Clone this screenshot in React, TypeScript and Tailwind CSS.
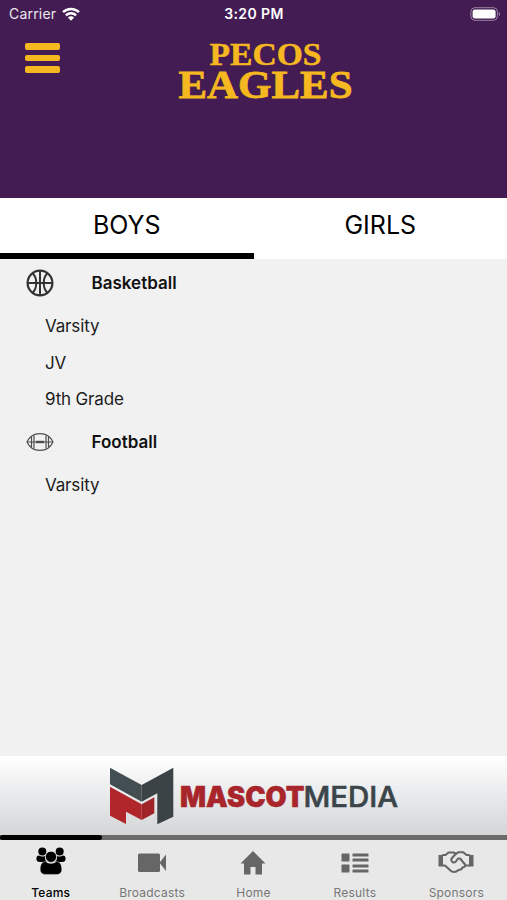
import type { ReactNode } from "react";
import clsx from "clsx";

const sports = [
  { name: "Basketball", icon: <BasketballIcon />, teams: ["Varsity", "JV", "9th Grade"] },
  { name: "Football", icon: <FootballIcon />, teams: ["Varsity"] },
];

const navItems: { label: string; icon: ReactNode; active?: boolean }[] = [
  { label: "Teams", icon: <TeamsIcon />, active: true },
  { label: "Broadcasts", icon: <CameraIcon /> },
  { label: "Home", icon: <HomeIcon /> },
  { label: "Results", icon: <ResultsIcon /> },
  { label: "Sponsors", icon: <HandshakeIcon /> },
];

function BasketballIcon() {
  return (
    <svg viewBox="0 0 28 28" className="w-7 h-7" fill="none" stroke="#333333" strokeWidth="2">
      <circle cx="14" cy="14" r="12.4" strokeWidth="2.2" />
      <path d="M14 1.5v25M1.5 14h25" />
      <path d="M6.5 4C11.5 9 11.5 19 6.5 24M21.5 4C16.5 9 16.5 19 21.5 24" />
    </svg>
  );
}

function FootballIcon() {
  return (
    <svg viewBox="0 0 28 20" className="w-7 h-5" fill="none" stroke="#4d4d4d" strokeWidth="1.2">
      <path d="M1 10C6 -1.2 22 -1.2 27 10C22 21.2 6 21.2 1 10Z" />
      <path d="M1 10h26M5.5 5v10M8 3.4v13.2M20 3.4v13.2M22.5 5v10" />
      <path d="M10 10h8" strokeWidth="2.4" />
    </svg>
  );
}

function TeamsIcon() {
  return (
    <svg viewBox="0 0 30 28" className="w-[30px] h-7" fill="currentColor">
      <circle cx="6.3" cy="4.6" r="4" />
      <circle cx="23.7" cy="4.6" r="4" />
      <path d="M3 8.5c1 .7 2.2 1 3.4 1 1 0 1.8-.2 2.6-.6-.3 2.9.5 4.7 1.7 6.1H4C1.5 15 .4 13.8.4 12c0-1.8.6-3.500 2.600-3.500ZM27 8.500c-1 .7-2.200 1-3.400 1-1 0-1.800-.2-2.600-.6.3 2.900-.5 4.700-1.700 6.100H26c2.500 0 3.600-1.200 3.600-3 0-1.800-.6-3.500-2.600-3.500Z" />
      <path
        d="M9.500 14.500c1.500 1.300 3.400 2 5.500 2s4-.7 5.500-2c4 0 5.300 4.200 5.300 8 0 3-1.800 4.900-4.600 4.900H8.800c-2.800 0-4.600-1.900-4.600-4.900 0-3.800 1.300-8 5.300-8Z"
        stroke="#e8e8e8"
        strokeWidth=".4"
      />
      <circle cx="15" cy="9.8" r="5.600" stroke="#e8e8e8" strokeWidth=".7" />
    </svg>
  );
}

function CameraIcon() {
  return (
    <svg viewBox="0 0 30 28" className="w-[30px] h-7" fill="currentColor">
      <rect x="1" y="6.500" width="22" height="18.500" rx="1.500" />
      <path d="M22.500 15.800 29 7.500v16.500Z" />
    </svg>
  );
}

function HomeIcon() {
  return (
    <svg viewBox="0 0 26 28" className="w-[26px] h-7" fill="currentColor">
      <path d="M13 4 .5 16.500H4v11h6.500V20h5v7.500H22v-11h3.500Z" />
    </svg>
  );
}

function ResultsIcon() {
  return (
    <svg viewBox="0 0 28 28" className="w-7 h-7" fill="currentColor">
      <rect x="0.5" y="6.500" width="8" height="8" rx=".6" />
      <rect x="0.5" y="17.500" width="8" height="8" rx=".6" />
      <rect x="11.500" y="6.500" width="16" height="3" rx=".6" />
      <rect x="11.500" y="11.500" width="16" height="3" rx=".6" />
      <rect x="11.500" y="17.500" width="16" height="3" rx=".6" />
      <rect x="11.500" y="22.500" width="16" height="3" rx=".6" />
    </svg>
  );
}

function HandshakeIcon() {
  return (
    <svg
      viewBox="0 0 36 28"
      className="w-9 h-7"
      fill="none"
      stroke="currentColor"
      strokeWidth="2.1"
      strokeLinejoin="round"
      strokeLinecap="round"
    >
      <path d="M.5 8H5v11.500H.5ZM31 8h4.500v11.500H31Z" fill="currentColor" stroke="none" />
      <path d="M5 8h2.500l3-2.500h5L18 6.800l2.500-1.600h4.800L28.500 8H31" />
      <path d="M5 18.500h2l5.500 5c1 1 2.200 1.500 3.500 1.500 2 0 3.500-1 4.500-2 2 0 3.500-1 4-2.500 1.500-.3 2.500-1 3-2H31" />
      <path d="M18 6.800 14 11c-1.200 1.500-.8 3.500.8 4.200 1.400.6 2.700 0 3.500-1.200l1.800-2.500h2L27 17.500" />
    </svg>
  );
}

function StatusBar() {
  return (
    <div className="grid grid-cols-3 items-center h-[27px] pl-[9px] pr-[6px] text-white">
      <div className="flex items-center gap-[6px]">
        <span className="text-[14px] tracking-[0.2px] text-white/90">Carrier</span>
        <svg viewBox="0 0 18 14" className="w-[18px] h-[14px]" fill="none" stroke="white" strokeWidth="2.5">
          <path d="M1 5.200a11.500 11.500 0 0 1 16 0M3.900 8.400a7.300 7.300 0 0 1 10.200 0" />
          <path d="M9 13.800 5.900 10.600a4.400 4.400 0 0 1 6.200 0Z" fill="white" stroke="none" />
        </svg>
      </div>
      <span className="pr-[2px] text-center text-[14px] font-semibold tracking-[0.4px]">3:20 PM</span>
      <svg viewBox="0 0 31 14" className="w-[31px] h-[14px] justify-self-end">
        <rect x=".9" y=".7" width="26.500" height="12.600" rx="4" fill="none" stroke="white" strokeOpacity=".45" />
        <rect x="2.600" y="2.400" width="23" height="9.200" rx="2.400" fill="white" />
        <path d="M28.800 5c1.600.5 1.600 3.500 0 4Z" fill="white" fillOpacity=".5" />
      </svg>
    </div>
  );
}

function Header() {
  return (
    <header className="h-[198px] bg-[#431c53]">
      <StatusBar />
      <div className="flex pl-[25px]">
        <button className="flex flex-col gap-[5px] pt-[16px] self-start">
          <span className="w-[35px] h-[6.5px] rounded-[2px] bg-[#f5b821]" />
          <span className="w-[35px] h-[6.5px] rounded-[2px] bg-[#f5b821]" />
          <span className="w-[35px] h-[6.5px] rounded-[2px] bg-[#f5b821]" />
        </button>
        <svg
          viewBox="0 0 180 90"
          className="w-[180px] h-[90px] ml-[116px] font-['Liberation_Serif',serif] font-bold"
          fill="#f5b821"
          stroke="#f5b821"
          strokeWidth=".5"
        >
          <text x="33.5" y="37.500" fontSize="32" textLength="112" lengthAdjust="spacingAndGlyphs">PECOS</text>
          <text x="2.5" y="71.300" fontSize="41" strokeWidth=".8" textLength="174" lengthAdjust="spacingAndGlyphs">EAGLES</text>
        </svg>
      </div>
    </header>
  );
}

function Tabs() {
  return (
    <div className="grid grid-cols-2 h-[61px] bg-white text-[25px] text-black">
      <button className="pt-px border-b-[6px] border-black">BOYS</button>
      <button className="pt-px border-b-[6px] border-white">GIRLS</button>
    </div>
  );
}

function SponsorBanner() {
  return (
    <div className="h-[79px] pl-[109px] pt-[11px] bg-linear-to-b from-white to-[#d3d5d7]">
      <svg viewBox="0 0 290 60" className="w-[290px] h-[60px] font-['Inter',sans-serif]">
        <path d="M1 .7 32.700 18v16.700L1 17.300Z" fill="#434e52" />
        <path d="M32.700 18 64.300.7v49L48.300 57.300v-31L32.700 34.700Z" fill="#3b4346" />
        <path d="M1 19.700 32.700 37.300V53L17 44.700V57L1 48.700Z" fill="#b0262b" />
        <path d="M32.700 37.300 45.300 30.300v16L32.700 53Z" fill="#a02327" />
        <text x="71" y="39.500" fontSize="28" fontWeight="900" fill="#a8262b" stroke="#a8262b" strokeWidth=".5" textLength="124.5" lengthAdjust="spacingAndGlyphs">MASCOT</text>
        <text x="194.5" y="39.500" fontSize="28" fontWeight="500" fill="#3b4549" stroke="#3b4549" strokeWidth=".6" textLength="94.5" lengthAdjust="spacingAndGlyphs">MEDIA</text>
      </svg>
    </div>
  );
}

function BottomNav() {
  return (
    <nav className="bg-[#e8e8e8]">
      {/* Progress line */}
      <div className="h-[5px] bg-[#6b6b6b]">
        <div className="w-[102px] h-[5px] rounded-full bg-black" />
      </div>
      <div className="grid grid-cols-5 h-[60px]">
        {navItems.map((item) => (
          <button
            key={item.label}
            className={clsx(
              "flex flex-col items-center pt-[7px] whitespace-nowrap",
              item.active ? "text-black" : "text-[#666666]"
            )}
          >
            <span className="flex items-center h-7">{item.icon}</span>
            <span
              className={clsx(
                "mt-[10px] text-[12px] leading-4 tracking-[0.2px]",
                item.active ? "font-medium" : "text-[#777777]"
              )}
            >
              {item.label}
            </span>
          </button>
        ))}
      </div>
    </nav>
  );
}

export default function App() {
  return (
    <div className="flex flex-col w-full h-screen overflow-hidden bg-[#f1f1f1] font-['Inter',sans-serif]">
      <Header />
      <Tabs />
      <main className="flex-1">
        {sports.map((sport) => (
          <section key={sport.name}>
            <div className="flex items-center h-[48.7px] pl-[26px]">
              {sport.icon}
              <h2 className="ml-[37.5px] pt-px text-[17px] font-semibold text-[#111111]">{sport.name}</h2>
            </div>
            <ul>
              {sport.teams.map((team) => (
                <li
                  key={team}
                  className="flex items-center h-[36.6px] pl-[45px] pt-[2px] text-[17px] tracking-[-0.15px] text-[#1c1c1c]"
                >
                  {team}
                </li>
              ))}
            </ul>
          </section>
        ))}
      </main>
      <SponsorBanner />
      <BottomNav />
    </div>
  );
}
